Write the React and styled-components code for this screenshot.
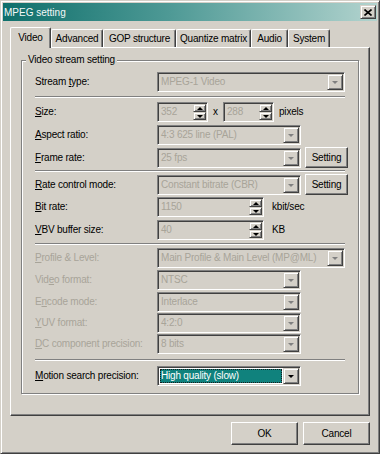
import React from 'react';
import styled, { createGlobalStyle } from 'styled-components';

const face = '#d4d0c8';
const shadow = '#808080';
const darkShadow = '#404040';
const dimText = '#a8a499';

const GlobalStyle = createGlobalStyle`
  html, body {
    margin: 0;
    background: ${face};
  }
  body {
    font-family: "Liberation Sans", Arial, sans-serif;
    font-size: 10px;
    letter-spacing: -0.2px;
    color: #000;
  }
`;

const Window = styled.div`
  width: 380px;
  height: 454px;
  box-sizing: border-box;
  padding: 2px;
  background: ${face};
  border: 1px solid;
  border-color: ${face} ${darkShadow} ${darkShadow} ${face};
  box-shadow: inset 1px 1px 0 #fff, inset -1px -1px 0 ${shadow};
`;

const TitleBar = styled.div`
  display: flex;
  align-items: center;
  height: 18px;
  padding-left: 1px;
  background: linear-gradient(to right, #0e6f6b 0%, #4f9a96 45%, #b2d3ce 100%);
`;

const Title = styled.span`
  flex: 1;
  color: #f4f8f8;
  font-size: 10px;
  letter-spacing: 0;
`;

const raised = `
  box-sizing: border-box;
  background: ${face};
  border: 1px solid;
  border-color: ${face} ${darkShadow} ${darkShadow} ${face};
  box-shadow: inset 1px 1px 0 #fff, inset -1px -1px 0 ${shadow};
`;

const CloseButton = styled.div`
  ${raised}
  width: 16px;
  height: 14px;
  margin-right: 1px;
  display: flex;
  align-items: center;
  justify-content: center;
`;

const Body = styled.div`
  padding: 6px 7px 0;
`;

const TabStrip = styled.div`
  display: flex;
  align-items: flex-end;
  height: 20px;
  position: relative;
  z-index: 1;
`;

const Tab = styled.div`
  box-sizing: border-box;
  width: ${p => p.$w}px;
  height: ${p => (p.$active ? 21 : 18)}px;
  margin-bottom: ${p => (p.$active ? -1 : 0)}px;
  display: flex;
  align-items: center;
  justify-content: center;
  padding-bottom: ${p => (p.$active ? 2 : 0)}px;
  background: ${face};
  border-top: 1px solid #fff;
  border-left: 1px solid #fff;
  border-right: 1px solid ${darkShadow};
  border-top-left-radius: 2px;
  border-top-right-radius: 2px;
  box-shadow: inset -1px 0 0 ${shadow};
`;

const Panel = styled.div`
  box-sizing: border-box;
  width: 360px;
  height: 369px;
  padding: 12px 10px 0;
  border: 1px solid;
  border-color: #fff ${darkShadow} ${darkShadow} #fff;
  box-shadow: inset -1px -1px 0 ${shadow};
`;

const GroupBox = styled.div`
  padding: 0 13px 6px;
  border: 1px solid ${shadow};
  box-shadow: inset 1px 1px 0 #fff, 1px 1px 0 #fff;
`;

const Caption = styled.div`
  width: fit-content;
  height: 12px;
  line-height: 12px;
  margin: -7px 0 5px -9px;
  padding: 0 2px;
  background: ${face};
`;

const Row = styled.div`
  display: flex;
  align-items: flex-start;
  box-sizing: border-box;
  height: ${p => p.$h}px;
  padding-top: 1px;
`;

const Label = styled.div`
  width: 122px;
  flex-shrink: 0;
  height: 20px;
  line-height: 20px;
  white-space: nowrap;
  color: ${p => (p.$dim ? dimText : '#000')};
`;

const Key = styled.span`
  text-decoration: underline;
  text-underline-offset: 1px;
`;

const Field = styled.div`
  display: flex;
  box-sizing: border-box;
  width: ${p => p.$w}px;
  height: 20px;
  padding: 1px;
  flex-shrink: 0;
  border: 1px solid;
  border-color: ${shadow} #fff #fff ${shadow};
  box-shadow: inset 1px 1px 0 ${darkShadow}, inset -1px -1px 0 ${face};
  background: ${p => (p.$white ? '#fff' : face)};
`;

const Value = styled.div`
  flex: 1;
  padding-left: 2px;
  line-height: 16px;
  white-space: nowrap;
  overflow: hidden;
  color: ${dimText};
`;

const Selection = styled.div`
  flex: 1;
  margin: 1px;
  padding-left: 1px;
  line-height: 14px;
  white-space: nowrap;
  color: #fff;
  background: #10827d;
  outline: 1px dotted #1a1a1a;
  outline-offset: -1px;
`;

const DropButton = styled.div`
  ${raised}
  width: 16px;
  height: 16px;
  display: flex;
  align-items: center;
  justify-content: center;
`;

const SpinButtons = styled.div`
  display: flex;
  flex-direction: column;
  width: 13px;
`;

const SpinButton = styled.div`
  ${raised}
  height: 8px;
  display: flex;
  align-items: center;
  justify-content: center;
`;

const Arrow = styled.span`
  width: 0;
  height: 0;
  border-left: 3px solid transparent;
  border-right: 3px solid transparent;
  ${p =>
    p.$up
      ? `border-bottom: 3px solid ${p.$dim ? shadow : '#000'};`
      : `border-top: 3px solid ${p.$dim ? shadow : '#000'};`}
`;

const Unit = styled.div`
  height: 20px;
  line-height: 20px;
  width: ${p => (p.$w ? `${p.$w}px` : 'auto')};
  margin-left: ${p => p.$gap || 0}px;
  text-align: center;
`;

const PushButton = styled.div`
  ${raised}
  width: ${p => p.$w}px;
  height: ${p => p.$h}px;
  margin: ${p => p.$m || 0};
  display: flex;
  align-items: center;
  justify-content: center;
  flex-shrink: 0;
  border-color: #fff ${darkShadow} ${darkShadow} #fff;
  box-shadow: inset -1px -1px 0 ${shadow};
`;

const Separator = styled.div`
  height: 0;
  margin: ${p => p.$top}px 0 ${p => p.$bottom}px;
  border-top: 1px solid ${shadow};
  border-bottom: 1px solid #fff;
`;

const ButtonBar = styled.div`
  display: flex;
  justify-content: flex-end;
  gap: 5px;
  width: 360px;
  margin-top: 6px;
`;

const Combo = ({ w, value, white, children }) => (
  <Field $w={w} $white={white}>
    {children || <Value>{value}</Value>}
    <DropButton>
      <Arrow $dim={!white} />
    </DropButton>
  </Field>
);

const Spin = ({ w, value }) => (
  <Field $w={w}>
    <Value>{value}</Value>
    <SpinButtons>
      <SpinButton>
        <Arrow $up />
      </SpinButton>
      <SpinButton>
        <Arrow />
      </SpinButton>
    </SpinButtons>
  </Field>
);

const tabs = [
  ['Video', 41],
  ['Advanced', 52],
  ['GOP structure', 73],
  ['Quantize matrix', 75],
  ['Audio', 37],
  ['System', 42],
];

export default function App() {
  return (
    <>
      <GlobalStyle />
      <Window>
        <TitleBar>
          <Title>MPEG setting</Title>
          <CloseButton>
            <svg width="8" height="7" viewBox="0 0 8 7">
              <path d="M0.5 0.5 L7.5 6.5 M7.5 0.5 L0.5 6.5" stroke="#000" strokeWidth="1.6" />
            </svg>
          </CloseButton>
        </TitleBar>
        <Body>
          <TabStrip>
            {tabs.map(([name, w], i) => (
              <Tab key={name} $w={w} $active={i === 0}>
                {name}
              </Tab>
            ))}
          </TabStrip>
          <Panel>
            <GroupBox>
              <Caption>Video stream setting</Caption>

              <Row $h={22}>
                <Label>
                  Stream <Key>t</Key>ype:
                </Label>
                <Combo w={188} value="MPEG-1 Video" />
              </Row>
              <Separator $top={3} $bottom={3} />

              <Row $h={23}>
                <Label>
                  <Key>S</Key>ize:
                </Label>
                <Spin w={51} value="352" />
                <Unit $w={15}>x</Unit>
                <Spin w={51} value="288" />
                <Unit $gap={5}>pixels</Unit>
              </Row>
              <Row $h={23}>
                <Label>
                  <Key>A</Key>spect ratio:
                </Label>
                <Combo w={144} value="4:3 625 line (PAL)" />
              </Row>
              <Row $h={23}>
                <Label>
                  <Key>F</Key>rame rate:
                </Label>
                <Combo w={144} value="25 fps" />
                <PushButton $w={43} $h={21} $m="-1px 0 0 4px">
                  Setting
                </PushButton>
              </Row>
              <Separator $top={0} $bottom={2} />

              <Row $h={22}>
                <Label>
                  <Key>R</Key>ate control mode:
                </Label>
                <Combo w={144} value="Constant bitrate (CBR)" />
                <PushButton $w={43} $h={21} $m="-1px 0 0 4px">
                  Setting
                </PushButton>
              </Row>
              <Row $h={23}>
                <Label>
                  <Key>B</Key>it rate:
                </Label>
                <Spin w={107} value="1150" />
                <Unit $gap={8}>kbit/sec</Unit>
              </Row>
              <Row $h={22}>
                <Label>
                  <Key>V</Key>BV buffer size:
                </Label>
                <Spin w={107} value="40" />
                <Unit $gap={8}>KB</Unit>
              </Row>
              <Separator $top={2} $bottom={2} />

              <Row $h={22}>
                <Label $dim>
                  <Key>P</Key>rofile &amp; Level:
                </Label>
                <Combo w={188} value="Main Profile & Main Level (MP@ML)" />
              </Row>
              <Row $h={22}>
                <Label $dim>
                  Vid<Key>e</Key>o format:
                </Label>
                <Combo w={144} value="NTSC" />
              </Row>
              <Row $h={21}>
                <Label $dim>
                  E<Key>n</Key>code mode:
                </Label>
                <Combo w={144} value="Interlace" />
              </Row>
              <Row $h={21}>
                <Label $dim>
                  <Key>Y</Key>UV format:
                </Label>
                <Combo w={144} value="4:2:0" />
              </Row>
              <Row $h={21}>
                <Label $dim>
                  <Key>D</Key>C component precision:
                </Label>
                <Combo w={144} value="8 bits" />
              </Row>
              <Separator $top={5} $bottom={4} />

              <Row $h={22}>
                <Label>
                  <Key>M</Key>otion search precision:
                </Label>
                <Combo w={144} white>
                  <Selection>High quality (slow)</Selection>
                </Combo>
              </Row>
            </GroupBox>
          </Panel>
          <ButtonBar>
            <PushButton $w={67} $h={23}>
              OK
            </PushButton>
            <PushButton $w={67} $h={23}>
              Cancel
            </PushButton>
          </ButtonBar>
        </Body>
      </Window>
    </>
  );
}
